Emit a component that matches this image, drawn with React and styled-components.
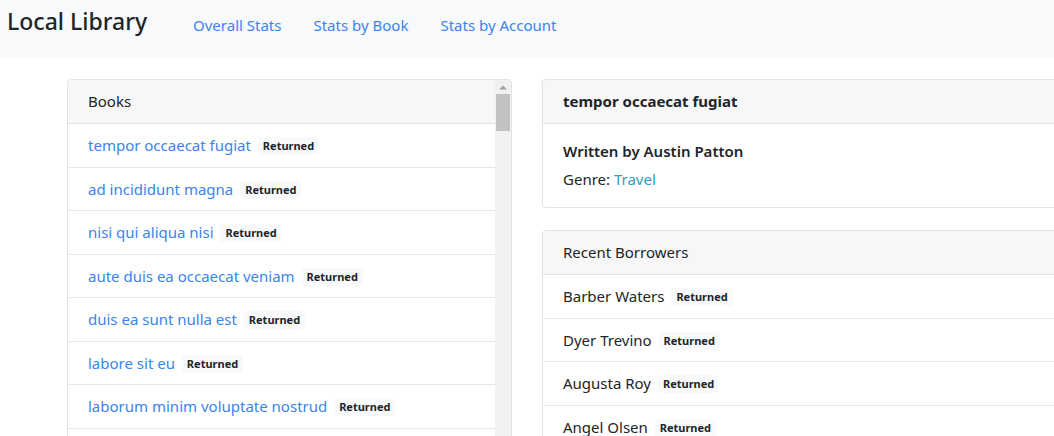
import React from "react";
import styled, { createGlobalStyle } from "styled-components";

const Global = createGlobalStyle`
  html, body { margin: 0; padding: 0; overflow: hidden; background: #fff; }
  body {
    font-family: "Noto Sans", "Open Sans", Arial, sans-serif;
    font-size: 15px;
    color: #212529;
  }
  * { box-sizing: border-box; }
`;

const Navbar = styled.nav`
  display: flex;
  align-items: flex-start;
  height: 58px;
  padding: 6px 7px 0;
  background: #f8f9fa;
`;

const Brand = styled.div`
  font-size: 23px;
  line-height: 30px;
  font-weight: 500;
  color: #212529;
  margin-right: 30px;
`;

const NavLinks = styled.div`
  display: flex;
  padding-top: 8px;
`;

const NavLink = styled.a`
  color: #3b84f0;
  text-decoration: none;
  font-size: 15px;
  line-height: 22px;
  padding: 0 16px;
`;

const Main = styled.main`
  display: flex;
  align-items: flex-start;
  gap: 30px;
  padding: 21px 0 0 67px;
`;

const Card = styled.section`
  border: 1px solid #e3e3e3;
  border-radius: 4px;
  background: #fff;
  overflow: hidden;
`;

const ScrollCard = styled(Card)`
  display: flex;
  width: 445px;
  height: 420px;
  flex-shrink: 0;
`;

const ScrollContent = styled.div`
  flex: 1;
  min-width: 0;
`;

const Scrollbar = styled.div`
  width: 16px;
  flex-shrink: 0;
  display: flex;
  flex-direction: column;
  align-items: center;
  background: #f1f1f1;
`;

const ScrollButton = styled.div`
  height: 14px;
  width: 100%;
  display: flex;
  align-items: center;
  justify-content: center;
`;

const ScrollThumb = styled.div`
  width: 14px;
  height: 37px;
  background: #c1c1c1;
`;

const RightColumn = styled.div`
  display: flex;
  flex-direction: column;
  gap: 22px;
  width: 560px;
  flex-shrink: 0;
`;

const CardHeader = styled.header`
  background: #f7f7f7;
  border-bottom: 1px solid #e3e3e3;
  padding: 11px 20px;
  line-height: 21px;
  font-size: 15px;
  font-weight: ${(p) => (p.$bold ? 700 : 400)};
`;

const CardBody = styled.div`
  padding: 18px 20px 17px;
`;

const CardTitle = styled.h5`
  margin: 0 0 8px;
  font-size: 15px;
  font-weight: 600;
  line-height: 19px;
`;

const CardText = styled.p`
  margin: 0;
  font-size: 15px;
  line-height: 21px;
`;

const InfoLink = styled.a`
  color: #2ba0c2;
  text-decoration: none;
`;

const List = styled.ul`
  list-style: none;
  margin: 0;
  padding: 0;
`;

const Item = styled.li`
  padding: 11px 20px;
  line-height: 21px;
  font-size: 15px;
  border-bottom: 1px solid #e6e6e6;
  height: 43.5px;
  white-space: nowrap;
`;

const ItemLink = styled.a`
  color: #3b84f0;
  text-decoration: none;
`;

const Badge = styled.span`
  display: inline-block;
  margin-left: 3px;
  padding: 2px 5px;
  font-size: 11px;
  font-weight: 700;
  line-height: 1.3;
  border-radius: 3px;
  background: #f8f9fa;
  color: #212529;
  vertical-align: 1px;
`;

const books = [
  "tempor occaecat fugiat",
  "ad incididunt magna",
  "nisi qui aliqua nisi",
  "aute duis ea occaecat veniam",
  "duis ea sunt nulla est",
  "labore sit eu",
  "laborum minim voluptate nostrud",
];

const borrowers = ["Barber Waters", "Dyer Trevino", "Augusta Roy", "Angel Olsen"];

export default function App() {
  return (
    <>
      <Global />
      <Navbar>
        <Brand>Local Library</Brand>
        <NavLinks>
          <NavLink href="#">Overall Stats</NavLink>
          <NavLink href="#">Stats by Book</NavLink>
          <NavLink href="#">Stats by Account</NavLink>
        </NavLinks>
      </Navbar>
      <Main>
        <ScrollCard>
          <ScrollContent>
            <CardHeader>Books</CardHeader>
            <List>
              {books.map((b) => (
                <Item key={b}>
                  <ItemLink href="#">{b}</ItemLink> <Badge>Returned</Badge>
                </Item>
              ))}
            </List>
          </ScrollContent>
          <Scrollbar>
            <ScrollButton>
              <svg width="8" height="5" viewBox="0 0 8 5">
                <polygon points="0,4.5 4,0.5 8,4.5" fill="#a3a3a3" />
              </svg>
            </ScrollButton>
            <ScrollThumb />
          </Scrollbar>
        </ScrollCard>
        <RightColumn>
          <Card>
            <CardHeader $bold>tempor occaecat fugiat</CardHeader>
            <CardBody>
              <CardTitle>Written by Austin Patton</CardTitle>
              <CardText>
                Genre: <InfoLink href="#">Travel</InfoLink>
              </CardText>
            </CardBody>
          </Card>
          <Card>
            <CardHeader>Recent Borrowers</CardHeader>
            <List>
              {borrowers.map((b) => (
                <Item key={b}>
                  {b} <Badge>Returned</Badge>
                </Item>
              ))}
            </List>
          </Card>
        </RightColumn>
      </Main>
    </>
  );
}
